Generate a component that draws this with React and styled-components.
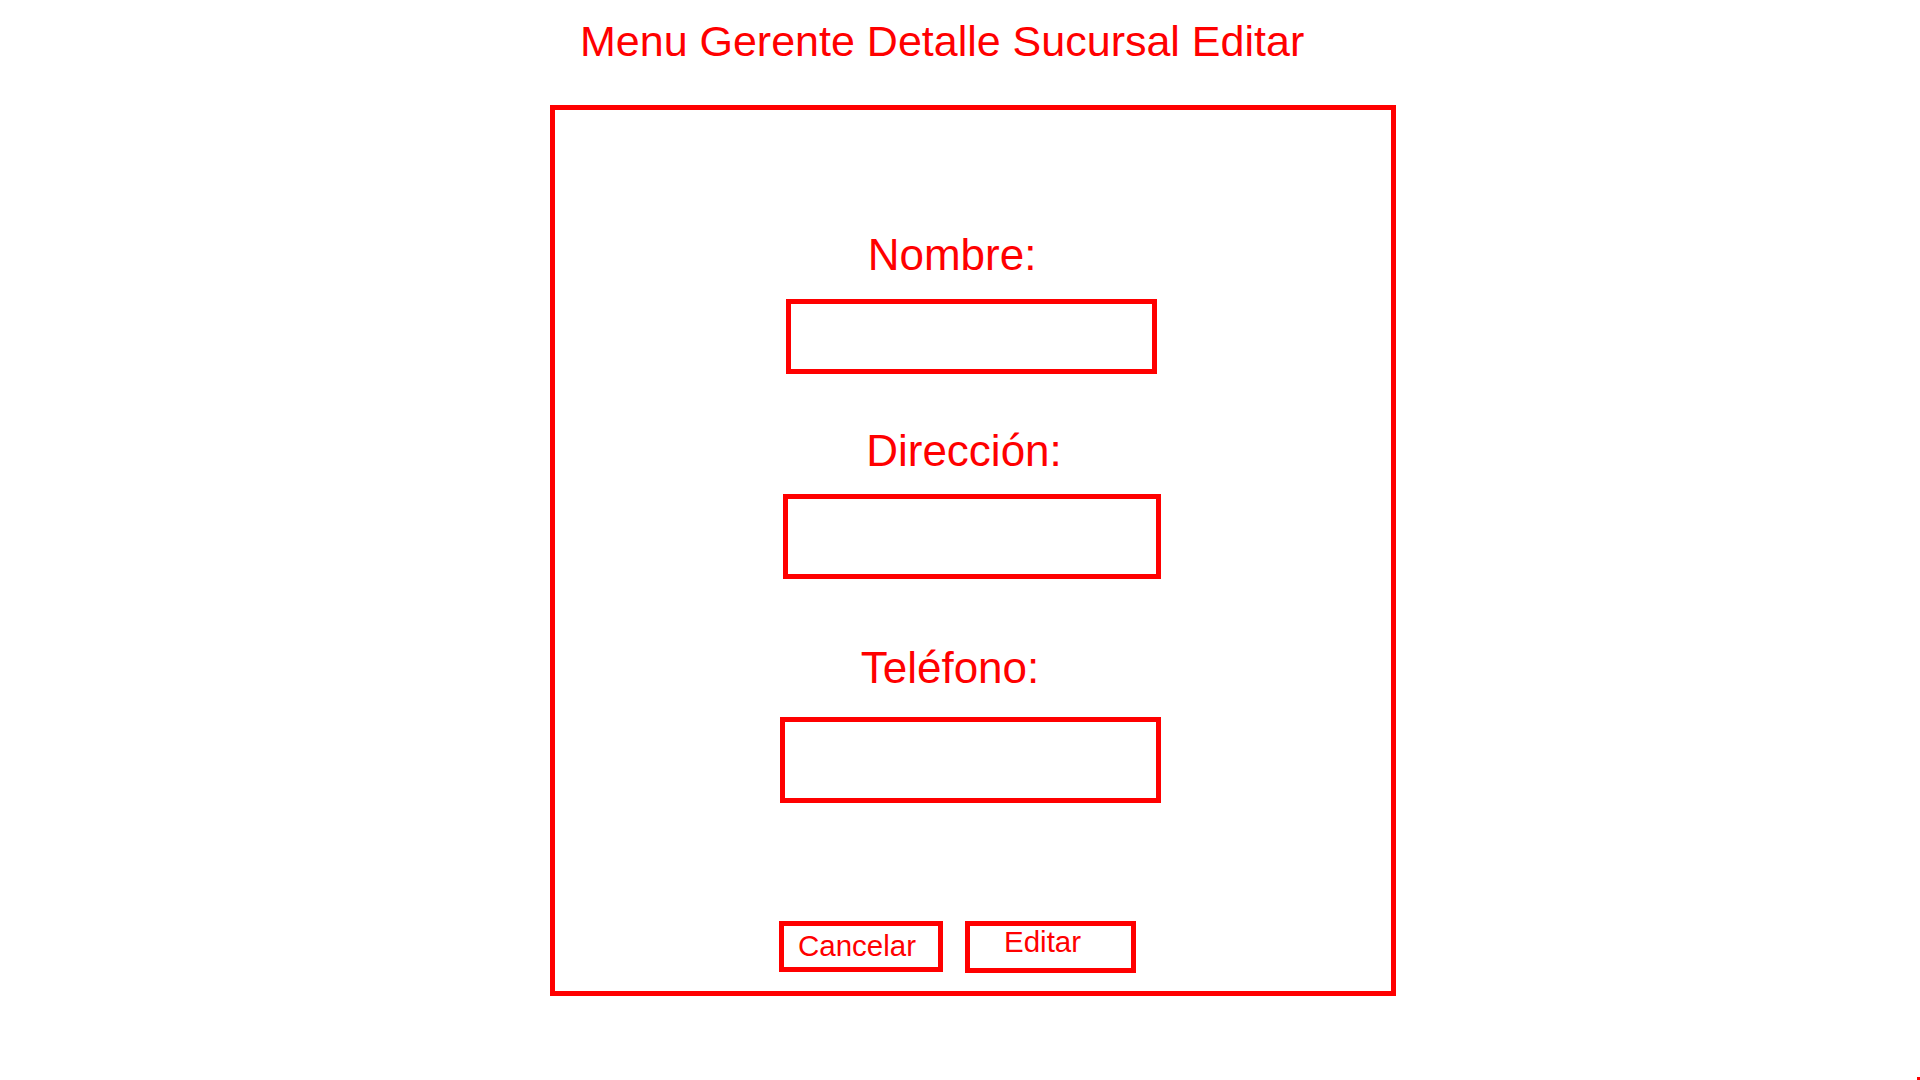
import styled, { createGlobalStyle } from "styled-components";

const RED = "#ff0000";

const GlobalStyle = createGlobalStyle`
  html, body {
    margin: 0;
    padding: 0;
    background: #ffffff;
  }
  body {
    font-family: "Liberation Sans", Arial, sans-serif;
    color: ${RED};
  }
`;

const Page = styled.div`
  display: flex;
  flex-direction: column;
  align-items: flex-start;
  width: 1920px;
  height: 1080px;
  padding-left: 550px;
  box-sizing: border-box;
  overflow: hidden;
`;

const Title = styled.h1`
  margin: 17px 0 0 30px;
  font-size: 43px;
  font-weight: 400;
  line-height: 48px;
  color: ${RED};
  white-space: nowrap;
`;

const Panel = styled.section`
  margin-top: 40px;
  width: 846px;
  height: 891px;
  box-sizing: border-box;
  border: 5px solid ${RED};
  padding-top: 121px;
  display: flex;
  flex-direction: column;
  align-items: center;
`;

const Label = styled.label`
  margin-top: ${(p) => p.$top}px;
  margin-right: ${(p) => p.$nudge * 2}px;
  font-size: 44px;
  line-height: 48px;
  color: ${RED};
  white-space: nowrap;
`;

const Field = styled.input`
  display: block;
  margin-top: ${(p) => p.$top}px;
  margin-right: ${(p) => p.$nudge * 2}px;
  width: ${(p) => p.$w}px;
  height: ${(p) => p.$h}px;
  box-sizing: border-box;
  border: 5px solid ${RED};
  border-radius: 0;
  background: #ffffff;
  outline: none;
  padding: 0 10px;
  font-family: "Liberation Sans", Arial, sans-serif;
  font-size: 24px;
  color: ${RED};
`;

const Actions = styled.div`
  display: flex;
  gap: 22px;
  margin-top: 118px;
  margin-right: 31px;
`;

const Button = styled.button`
  display: flex;
  align-items: flex-start;
  width: ${(p) => p.$w}px;
  height: ${(p) => p.$h}px;
  box-sizing: border-box;
  border: 5px solid ${RED};
  border-radius: 0;
  background: #ffffff;
  padding: ${(p) => p.$padTop}px 0 0 ${(p) => p.$padLeft}px;
  font-family: "Liberation Sans", Arial, sans-serif;
  font-size: 29.5px;
  line-height: 29px;
  color: ${RED};
  cursor: pointer;
`;

const CornerMark = styled.div`
  position: fixed;
  right: 0;
  bottom: 0;
  width: 3px;
  height: 3px;
  background: ${RED};
`;

const fields = [
  { label: "Nombre:", labelTop: 0, labelNudge: 21, top: 20, w: 371, h: 75, nudge: 1.5 },
  { label: "Dirección:", labelTop: 53, labelNudge: 9, top: 19, w: 378, h: 85, nudge: 1 },
  { label: "Teléfono:", labelTop: 65, labelNudge: 23, top: 25, w: 381, h: 86, nudge: 2.5 },
];

export default function App() {
  return (
    <>
      <GlobalStyle />
      <Page>
        <Title>Menu Gerente Detalle Sucursal Editar</Title>
        <Panel>
          {fields.map((f) => (
            <div key={f.label} style={{ display: "contents" }}>
              <Label $top={f.labelTop} $nudge={f.labelNudge}>
                {f.label}
              </Label>
              <Field type="text" $top={f.top} $w={f.w} $h={f.h} $nudge={f.nudge} />
            </div>
          ))}
          <Actions>
            <Button $w={164} $h={51} $padTop={5} $padLeft={14}>
              Cancelar
            </Button>
            <Button $w={171} $h={52} $padTop={1} $padLeft={34}>
              Editar
            </Button>
          </Actions>
        </Panel>
      </Page>
      <CornerMark />
    </>
  );
}
